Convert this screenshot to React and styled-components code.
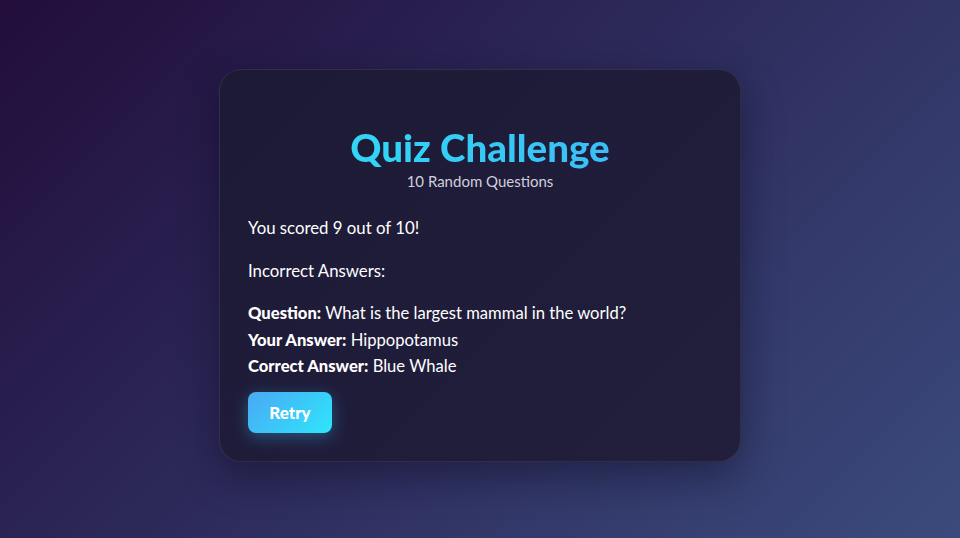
import React from 'react'
import styled, { createGlobalStyle } from 'styled-components'

const GlobalStyle = createGlobalStyle`
  * {
    box-sizing: border-box;
  }

  html, body {
    margin: 0;
    padding: 0;
    height: 100%;
  }

  body {
    font-family: 'Lato', 'Noto Sans', sans-serif;
    background: linear-gradient(135deg, #220d3b 0%, #2b2656 40%, #33396a 70%, #3b4a7c 100%);
    color: #fff;
  }

  #root {
    height: 100%;
  }
`;

const incorrect = [
  {
    question: 'What is the largest mammal in the world?',
    yourAnswer: 'Hippopotamus',
    correctAnswer: 'Blue Whale',
  },
];

export default function App() {
  return (
    <>
      <GlobalStyle />
      <Page>
        <Card>
          <Header>
            <Title>Quiz Challenge</Title>
            <Subtitle>10 Random Questions</Subtitle>
          </Header>
          <Score>You scored 9 out of 10!</Score>
          <SectionLabel>Incorrect Answers:</SectionLabel>
          {incorrect.map((item, i) => (
            <AnswerBlock key={i}>
              <Line><strong>Question:</strong> {item.question}</Line>
              <Line><strong>Your Answer:</strong> {item.yourAnswer}</Line>
              <Line><strong>Correct Answer:</strong> {item.correctAnswer}</Line>
            </AnswerBlock>
          ))}
          <RetryButton>Retry</RetryButton>
        </Card>
      </Page>
    </>
  )
}

const Page = styled.div`
  height: 538px;
  display: flex;
  align-items: center;
  justify-content: center;
  padding-bottom: 7px;
`;

const Card = styled.div`
  width: 522px;
  padding: 55px 28px 28px;
  border-radius: 22px;
  border: 1px solid rgba(255, 255, 255, 0.08);
  background: linear-gradient(135deg, #1d1a35 0%, #201d3b 60%, #221f3d 100%);
  box-shadow: 0 14px 40px rgba(10, 8, 30, 0.45);
`;

const Header = styled.div`
  text-align: center;
  margin-bottom: 24px;
`;

const Title = styled.h1`
  margin: 0;
  font-size: 38.5px;
  line-height: 44px;
  font-weight: 900;
  background: linear-gradient(90deg, #2ee0f5 0%, #3fb4f6 100%);
  -webkit-background-clip: text;
  background-clip: text;
  -webkit-text-fill-color: transparent;
`;

const Subtitle = styled.p`
  margin: 2px 0 0;
  font-size: 15px;
  line-height: 20px;
  color: #d0cfdd;
`;

const Score = styled.p`
  margin: 0 0 17px;
  font-size: 16.8px;
  line-height: 26px;
`;

const SectionLabel = styled.p`
  margin: 0 0 16px;
  font-size: 16.8px;
  line-height: 26px;
`;

const AnswerBlock = styled.div`
  margin-bottom: 12px;
`;

const Line = styled.p`
  margin: 0;
  font-size: 16.6px;
  line-height: 26.5px;

  strong {
    font-weight: 900;
  }
`;

const RetryButton = styled.button`
  width: 84px;
  height: 41px;
  border: none;
  border-radius: 8px;
  background: linear-gradient(135deg, #4aa8f5 0%, #2ee6fb 100%);
  color: #fff;
  font-family: 'Lato', 'Noto Sans', sans-serif;
  font-size: 17px;
  font-weight: 900;
  cursor: pointer;
  box-shadow: 0 4px 16px rgba(56, 190, 250, 0.35);
`;
